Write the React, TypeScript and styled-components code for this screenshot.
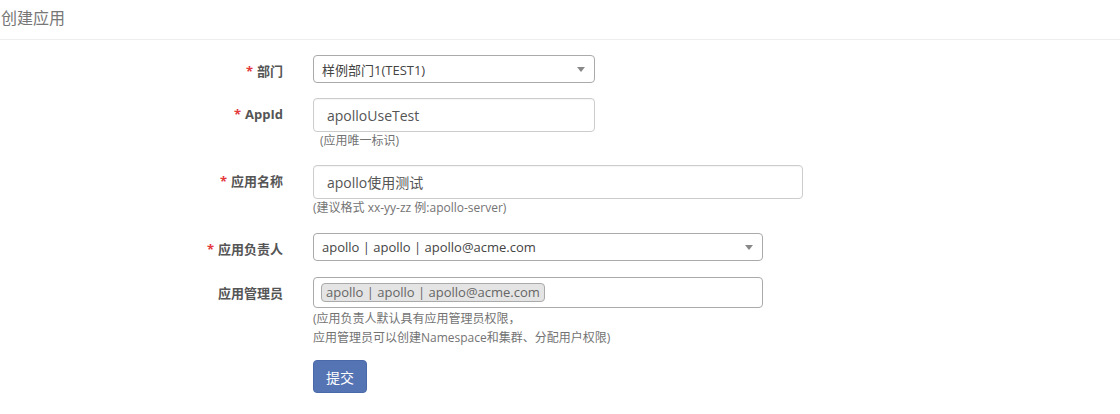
import React from "react";
import styled, { createGlobalStyle } from "styled-components";

const Global = createGlobalStyle`
  html, body { margin: 0; padding: 0; background: #fff; }
  body {
    font-family: "Open Sans", "Noto Sans CJK SC", sans-serif;
    font-size: 13px;
    color: #555;
  }
  * { box-sizing: border-box; }
`;

const Page = styled.div`
  width: 1120px;
  height: 414px;
  overflow: hidden;
  background: #fff;
`;

const Header = styled.div`
  height: 40px;
  border-bottom: 1px solid #eee;
  padding: 7px 0 0 1px;
  font-size: 16px;
  line-height: 22px;
  color: #777;
`;

const Form = styled.div`
  padding-top: 15px;
  display: flex;
  flex-direction: column;
`;

const Row = styled.div<{ $mb?: number }>`
  display: grid;
  grid-template-columns: 283px 1fr;
  column-gap: 30px;
  margin-bottom: ${(p) => (p.$mb ?? 15)}px;
`;

const Label = styled.div`
  text-align: right;
  font-weight: bold;
  font-size: 13px;
  line-height: 20px;
  padding-top: 6px;
  color: #555;
`;

const Star = styled.span`
  color: #e4393c;
  margin-right: 4px;
`;

const Field = styled.div`
  display: flex;
  flex-direction: column;
  align-items: flex-start;
`;

const Select = styled.div<{ $w: number }>`
  width: ${(p) => p.$w}px;
  height: 28px;
  border: 1px solid #aaa;
  border-radius: 4px;
  display: flex;
  align-items: center;
  justify-content: space-between;
  padding: 0 9px 0 8px;
  font-size: 13px;
  color: #444;
`;

const Arrow = styled.span`
  width: 0;
  height: 0;
  border-left: 4px solid transparent;
  border-right: 4px solid transparent;
  border-top: 5px solid #888;
  margin-top: 1px;
`;

const Input = styled.div<{ $w: number }>`
  width: ${(p) => p.$w}px;
  height: 34px;
  border: 1px solid #ccc;
  border-radius: 4px;
  padding: 0 13px;
  display: flex;
  align-items: center;
  font-size: 14px;
  color: #555;
  box-shadow: inset 0 1px 1px rgba(0, 0, 0, 0.04);
`;

const Multi = styled.div<{ $w: number }>`
  width: ${(p) => p.$w}px;
  height: 31px;
  border: 1px solid #aaa;
  border-radius: 4px;
  padding: 4px 7px;
  display: flex;
  align-items: flex-start;
`;

const Tag = styled.span`
  background: #e4e4e4;
  border: 1px solid #aaa;
  border-radius: 4px;
  padding: 0 4px;
  height: 19px;
  line-height: 17px;
  font-size: 13px;
  color: #666;
  margin-top: 1px;
`;

const Hint = styled.div<{ $indent?: number; $lh?: number }>`
  font-size: 12px;
  line-height: ${(p) => p.$lh ?? 18}px;
  color: #737373;
  padding-left: ${(p) => p.$indent ?? 0}px;
  padding-top: ${(p) => (p.$lh ? 1 : 0)}px;
`;

const Button = styled.button`
  width: 54px;
  height: 33px;
  border: 1px solid #4a69a8;
  border-radius: 4px;
  background: #5574b4;
  color: #fff;
  font-family: "Noto Sans CJK SC", "Open Sans", sans-serif;
  font-size: 14px;
  padding: 0;
  cursor: pointer;
`;

export default function App() {
  return (
    <Page>
      <Global />
      <Header>创建应用</Header>
      <Form>
        <Row $mb={15}>
          <Label>
            <Star>*</Star>部门
          </Label>
          <Field>
            <Select $w={282}>
              <span>样例部门1(TEST1)</span>
              <Arrow />
            </Select>
          </Field>
        </Row>
        <Row $mb={15}>
          <Label>
            <Star>*</Star>AppId
          </Label>
          <Field>
            <Input $w={282}>apolloUseTest</Input>
            <Hint $indent={7}>(应用唯一标识)</Hint>
          </Field>
        </Row>
        <Row $mb={16}>
          <Label>
            <Star>*</Star>应用名称
          </Label>
          <Field>
            <Input $w={490}>apollo使用测试</Input>
            <Hint>(建议格式 xx-yy-zz 例:apollo-server)</Hint>
          </Field>
        </Row>
        <Row $mb={16}>
          <Label>
            <Star>*</Star>应用负责人
          </Label>
          <Field>
            <Select $w={450}>
              <span>apollo | apollo | apollo@acme.com</span>
              <Arrow />
            </Select>
          </Field>
        </Row>
        <Row $mb={13}>
          <Label>应用管理员</Label>
          <Field>
            <Multi $w={450}>
              <Tag>apollo | apollo | apollo@acme.com</Tag>
            </Multi>
            <Hint $lh={19}>
              (应用负责人默认具有应用管理员权限，
              <br />
              应用管理员可以创建Namespace和集群、分配用户权限)
            </Hint>
          </Field>
        </Row>
        <Row>
          <div />
          <Field>
            <Button>提交</Button>
          </Field>
        </Row>
      </Form>
    </Page>
  );
}
